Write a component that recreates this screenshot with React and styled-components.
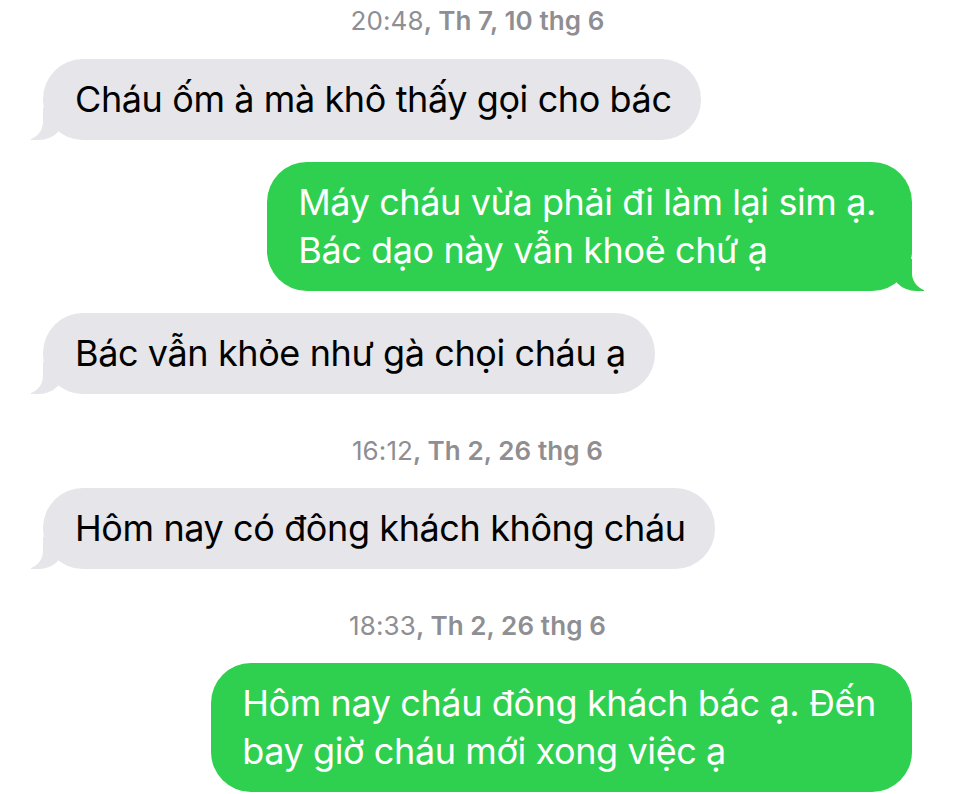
import React from 'react';
import styled, { createGlobalStyle } from 'styled-components';

const GlobalStyle = createGlobalStyle`
    html, body {
        margin: 0;
        padding: 0;
        background: #ffffff;
    }
    body {
        font-family: Inter, "Noto Sans", "Liberation Sans", sans-serif;
        -webkit-font-smoothing: antialiased;
    }
`;

const messages = [
    { type: 'time', time: '20:48', day: ', Th 7, 10 thg 6' },
    { type: 'in', lines: ['Cháu ốm à mà khô thấy gọi cho bác'] },
    { type: 'out', lines: ['Máy cháu vừa phải đi làm lại sim ạ.', 'Bác dạo này vẫn khoẻ chứ ạ'] },
    { type: 'in', lines: ['Bác vẫn khỏe như gà chọi cháu ạ'] },
    { type: 'time', time: '16:12', day: ', Th 2, 26 thg 6' },
    { type: 'in', lines: ['Hôm nay có đông khách không cháu'] },
    { type: 'time', time: '18:33', day: ', Th 2, 26 thg 6' },
    { type: 'out', lines: ['Hôm nay cháu đông khách bác ạ. Đến', 'bay giờ cháu mới xong việc ạ'], noTail: true },
];

const Thread = styled.div`
    display: flex;
    flex-direction: column;
    padding: 7px 48px 0 43px;
    height: 794px;
    box-sizing: border-box;
    overflow: hidden;
`;

const Stamp = styled.div`
    align-self: center;
    margin: ${props => props.first ? '0' : '21px'} 0 ${props => props.first ? '24px' : '23px'} 0;
    font-size: 26px;
    line-height: 28px;
    color: #8e8e93;
    font-weight: 400;
    letter-spacing: 0.1px;

    b {
        font-weight: 600;
    }
`;

const Bubble = styled.div`
    position: relative;
    align-self: ${props => props.out ? 'flex-end' : 'flex-start'};
    padding: 16px ${props => props.out ? '36px' : '29px'} 17px ${props => props.out ? '31px' : '32px'};
    margin-bottom: 22px;
    border-radius: 40px;
    font-size: 36px;
    line-height: 48px;
    letter-spacing: -0.4px;
    background: ${props => props.out ? '#2fd04f' : '#e5e5ea'};
    color: ${props => props.out ? '#ffffff' : '#000000'};
    white-space: nowrap;

    &::before {
        content: "";
        display: ${props => props.noTail ? 'none' : 'block'};
        position: absolute;
        bottom: 0;
        ${props => props.out ? 'right: -12px;' : 'left: -12px;'}
        width: 34px;
        height: 32px;
        background: ${props => props.out ? '#2fd04f' : '#e5e5ea'};
        ${props => props.out ? 'border-bottom-left-radius: 26px;' : 'border-bottom-right-radius: 26px;'}
    }

    &::after {
        content: "";
        display: ${props => props.noTail ? 'none' : 'block'};
        position: absolute;
        bottom: 0;
        ${props => props.out ? 'right: -40px;' : 'left: -40px;'}
        width: 40px;
        height: 34px;
        background: #ffffff;
        ${props => props.out ? 'border-bottom-left-radius: 18px;' : 'border-bottom-right-radius: 18px;'}
    }
`;

const Line = styled.span`
    display: block;
    position: relative;
    z-index: 1;
`;

export default function App() {
    return (
        <>
            <GlobalStyle />
            <Thread>
                {messages.map((m, i) =>
                    m.type === 'time' ? (
                        <Stamp key={i} first={i === 0}>
                            {m.time}<b>{m.day}</b>
                        </Stamp>
                    ) : (
                        <Bubble key={i} out={m.type === 'out'} noTail={m.noTail}>
                            {m.lines.map((l, j) => <Line key={j}>{l}</Line>)}
                        </Bubble>
                    )
                )}
            </Thread>
        </>
    );
}
